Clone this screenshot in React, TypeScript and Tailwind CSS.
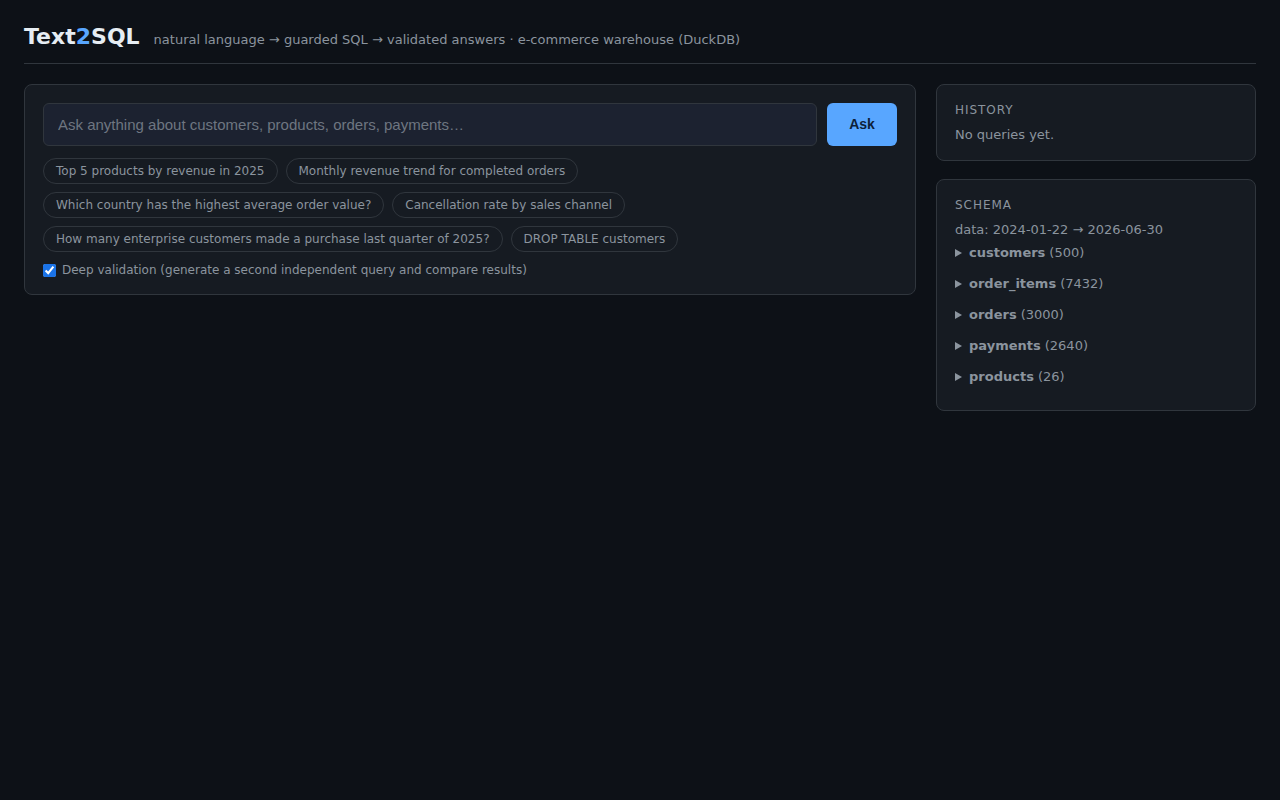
import React from "react";

const chips = [
  ["Top 5 products by revenue in 2025", "Monthly revenue trend for completed orders"],
  ["Which country has the highest average order value?", "Cancellation rate by sales channel"],
  ["How many enterprise customers made a purchase last quarter of 2025?", "DROP TABLE customers"],
];

const tables: [string, string][] = [
  ["customers", "500"],
  ["order_items", "7432"],
  ["orders", "3000"],
  ["payments", "2640"],
  ["products", "26"],
];

export default function App() {
  return (
    <div
      className="min-h-screen w-full bg-[#0d1117] text-[#e6edf3] px-6 pt-[23px]"
      style={{ fontFamily: '"DejaVu Sans", sans-serif' }}
    >
      <header className="flex items-baseline gap-[14px] pb-[12px] border-b border-[#30363d]">
        <h1 className="text-[22px] font-bold leading-[28px] text-[#e6edf3]">
          Text<span className="text-[#58a6ff]">2</span>SQL
        </h1>
        <span className="text-[13px] text-[#8b949e]">
          natural language → guarded SQL → validated answers · e-commerce warehouse (DuckDB)
        </span>
      </header>

      <main className="flex gap-5 mt-5 items-start">
        <section className="flex-1 bg-[#161b22] border border-[#30363d] rounded-[8px] px-[18px] pt-[18px] pb-[15px]">
          <div className="flex gap-[10px]">
            <input
              className="flex-1 h-[43px] bg-[#1c2230] border border-[#30363d] rounded-[6px] px-[14px] text-[15px] text-[#e6edf3] placeholder-[#6e7681] outline-none"
              style={{ fontFamily: '"Liberation Sans", Arial, sans-serif' }}
              placeholder="Ask anything about customers, products, orders, payments…"
            />
            <button
              className="w-[70px] h-[43px] bg-[#58a6ff] rounded-[6px] text-[14px] font-bold text-[#0d1f3a]"
              style={{ fontFamily: '"Liberation Sans", Arial, sans-serif' }}
            >
              Ask
            </button>
          </div>
          <div className="flex flex-col gap-2 mt-3">
            {chips.map((row, i) => (
              <div key={i} className="flex gap-2">
                {row.map((c) => (
                  <span
                    key={c}
                    className="h-[26px] flex items-center px-3 rounded-full border border-[#30363d] text-[12px] text-[#8b949e]"
                  >
                    {c}
                  </span>
                ))}
              </div>
            ))}
          </div>
          <label className="flex items-center gap-[6px] mt-[9px] text-[12px] leading-[18px] text-[#8b949e]">
            <input type="checkbox" defaultChecked className="w-[13px] h-[13px] accent-[#1a73e8]" />
            Deep validation (generate a second independent query and compare results)
          </label>
        </section>

        <aside className="w-[320px] flex flex-col gap-[18px]">
          <div className="bg-[#161b22] border border-[#30363d] rounded-[8px] px-[18px] pt-[17px] pb-[17px]">
            <div className="text-[12px] tracking-[0.08em] text-[#8b949e] leading-[16px]">HISTORY</div>
            <div className="text-[13px] text-[#8b949e] mt-[9px] leading-[16px]">No queries yet.</div>
          </div>
          <div className="bg-[#161b22] border border-[#30363d] rounded-[8px] px-[18px] pt-[17px] pb-[25px]">
            <div className="text-[12px] tracking-[0.08em] text-[#8b949e] leading-[16px]">SCHEMA</div>
            <div className="text-[13px] text-[#8b949e] mt-[9px] leading-[16px]">
              data: 2024-01-22 → 2026-06-30
            </div>
            <div className="flex flex-col gap-[15px] mt-[7px]">
              {tables.map(([n, c]) => (
                <div key={n} className="flex items-center text-[13px] text-[#8b949e] leading-[16px]">
                  <svg width="7" height="8" viewBox="0 0 7 8" className="mr-[7px] shrink-0">
                    <path d="M0 0 L7 4 L0 8 Z" fill="#8b949e" />
                  </svg>
                  <span className="font-bold">{n}</span>
                  <span className="ml-[4px]">({c})</span>
                </div>
              ))}
            </div>
          </div>
        </aside>
      </main>
    </div>
  );
}
